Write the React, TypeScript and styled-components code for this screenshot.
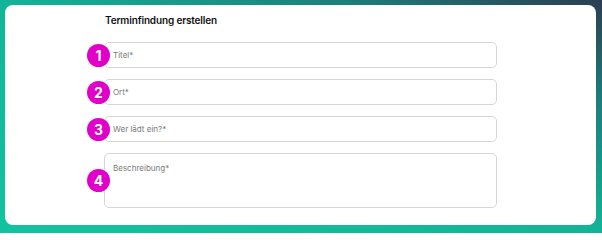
import React from 'react';
import styled, { createGlobalStyle } from 'styled-components';

const GlobalStyle = createGlobalStyle`
    html, body {
        margin: 0;
        padding: 0;
    }
    body {
        font-family: Inter, "Noto Sans", sans-serif;
    }
`;

const Page = styled.div`
    width: 602px;
    height: 233px;
    box-sizing: border-box;
    padding: 5px 6px 8px 5px;
    background: linear-gradient(to top right, #12c2a1 0%, #12b497 50%, #1b807a 78%, #2c3d50 100%);
`;

const Card = styled.div`
    height: 100%;
    box-sizing: border-box;
    background: #fff;
    border-radius: 8px;
    padding: 9px 0 0 82px;
    display: flex;
    flex-direction: column;
`;

const Title = styled.h3`
    margin: 0 0 16px 18px;
    font-size: 10px;
    line-height: 12px;
    font-weight: 600;
    letter-spacing: -0.15px;
    color: #111;
`;

const Fields = styled.div`
    display: flex;
    flex-direction: column;
    gap: 11px;
`;

const Row = styled.div`
    display: flex;
    align-items: center;
`;

const Badge = styled.span`
    flex: none;
    width: 23px;
    height: 23px;
    margin-right: -6px;
    border-radius: 50%;
    background: #e100c9;
    color: #fff;
    font-size: 14px;
    font-weight: 700;
    display: flex;
    align-items: center;
    justify-content: center;
    position: relative;
    z-index: 1;
`;

const Input = styled.input`
    width: 393px;
    height: 26px;
    box-sizing: border-box;
    border: 1px solid #d6d6d6;
    border-radius: 5px;
    padding: 0 8px;
    font-family: Inter, "Noto Sans", sans-serif;
    font-size: 8px;
    color: #333;
    outline: none;
    &::placeholder {
        color: #7a7a7a;
    }
`;

const TextArea = styled.textarea`
    width: 393px;
    height: 55px;
    box-sizing: border-box;
    border: 1px solid #d6d6d6;
    border-radius: 5px;
    padding: 9px 8px;
    font-family: Inter, "Noto Sans", sans-serif;
    font-size: 8px;
    line-height: 10px;
    resize: none;
    outline: none;
    &::placeholder {
        color: #7a7a7a;
    }
`;

const fields = ['Titel*', 'Ort*', 'Wer lädt ein?*'];

export default function App() {
    return (
        <>
            <GlobalStyle />
            <Page>
                <Card>
                    <Title>Terminfindung erstellen</Title>
                    <Fields>
                        {fields.map((label, i) => (
                            <Row key={label}>
                                <Badge>{i + 1}</Badge>
                                <Input placeholder={label} />
                            </Row>
                        ))}
                        <Row>
                            <Badge>4</Badge>
                            <TextArea placeholder="Beschreibung*" />
                        </Row>
                    </Fields>
                </Card>
            </Page>
        </>
    );
}
